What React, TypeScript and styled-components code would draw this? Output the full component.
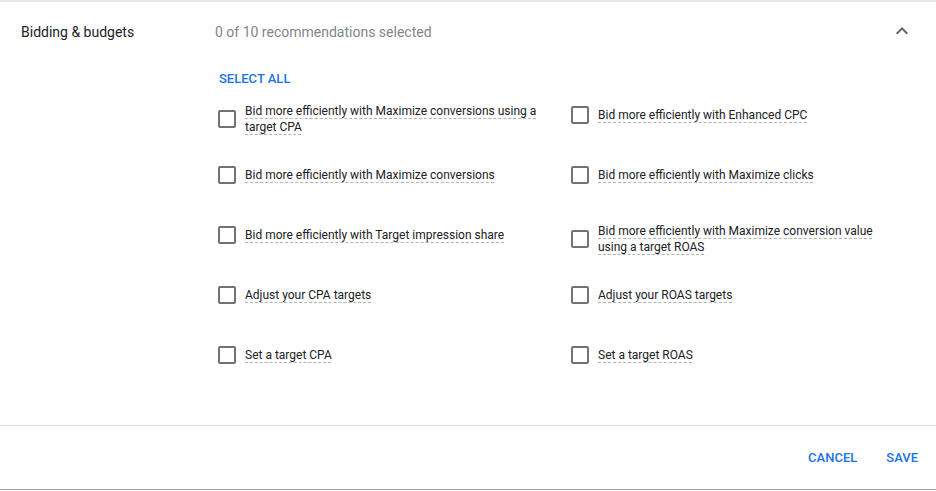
import styled, { createGlobalStyle } from "styled-components";

const GlobalStyle = createGlobalStyle`
  html, body {
    margin: 0;
    padding: 0;
    background: #fff;
  }
  body {
    font-family: Roboto, "Liberation Sans", Arial, sans-serif;
    color: #202124;
  }
`;

const recommendations = [
  "Bid more efficiently with Maximize conversions using a target CPA",
  "Bid more efficiently with Enhanced CPC",
  "Bid more efficiently with Maximize conversions",
  "Bid more efficiently with Maximize clicks",
  "Bid more efficiently with Target impression share",
  "Bid more efficiently with Maximize conversion value using a target ROAS",
  "Adjust your CPA targets",
  "Adjust your ROAS targets",
  "Set a target CPA",
  "Set a target ROAS",
];

function App() {
  return (
    <Panel>
      <GlobalStyle />
      <Header>
        <Title>Bidding &amp; budgets</Title>
        <Summary>0 of 10 recommendations selected</Summary>
        <ChevronUp viewBox="0 0 24 24" aria-hidden="true">
          <path d="M12 8l-6 6 1.41 1.41L12 10.83l4.59 4.58L18 14z" />
        </ChevronUp>
      </Header>
      <Body>
        <SelectRow>
          <TextButton>Select all</TextButton>
        </SelectRow>
        <Grid>
          {recommendations.map(text => (
            <Item key={text}>
              <Box role="checkbox" aria-checked="false" />
              <Label>
                <Dashed>{text}</Dashed>
              </Label>
            </Item>
          ))}
        </Grid>
      </Body>
      <Footer>
        <TextButton>Cancel</TextButton>
        <TextButton>Save</TextButton>
      </Footer>
    </Panel>
  );
}

const Panel = styled.section`
  width: 936px;
  height: 491px;
  box-sizing: border-box;
  border-top: 2px solid #e8e8e8;
  display: flex;
  flex-direction: column;
`;

const Header = styled.header`
  height: 60px;
  display: flex;
  align-items: center;
  padding: 0 22px 0 21px;
  font-size: 14px;
`;

const Title = styled.div`
  width: 194px;
  color: #202124;
`;

const Summary = styled.div`
  flex: 1;
  color: #80868b;
`;

const ChevronUp = styled.svg`
  width: 24px;
  height: 24px;
  fill: #5f6368;
  margin-top: -2px;
`;

const Body = styled.div`
  padding: 0 0 37px 215px;
  border-bottom: 1px solid #e0e0e0;
`;

const SelectRow = styled.div`
  height: 26px;
  box-sizing: border-box;
  padding-top: 6px;
`;

const TextButton = styled.button`
  border: none;
  background: none;
  padding: 0 4px;
  font-family: Roboto, "Liberation Sans", Arial, sans-serif;
  font-size: 13px;
  font-weight: 500;
  line-height: 16px;
  text-transform: uppercase;
  color: #1a73e8;
  cursor: pointer;
`;

const Grid = styled.div`
  display: grid;
  grid-template-columns: 353px 353px;
  grid-auto-rows: 60px;
  padding-left: 3px;
`;

const Item = styled.label`
  align-self: start;
  display: flex;
  align-items: center;
  gap: 9px;
  padding-top: 15px;
  cursor: pointer;
`;

const Box = styled.span`
  flex: none;
  width: 14px;
  height: 14px;
  border: 2px solid #6f7377;
  border-radius: 2px;
`;

const Label = styled.span`
  max-width: 300px;
  min-height: 23px;
  display: flex;
  align-items: center;
  font-size: 12px;
  line-height: 16px;
  color: #202124;
`;

const Dashed = styled.span`
  text-decoration: underline dashed #b0b3b8;
  text-decoration-thickness: 1px;
  text-underline-offset: 3px;
`;

const Footer = styled.footer`
  height: 63px;
  display: flex;
  align-items: center;
  justify-content: flex-end;
  gap: 21px;
  padding-right: 14px;
  border-bottom: 1px solid #a0a0a0;
`;

export default App;
